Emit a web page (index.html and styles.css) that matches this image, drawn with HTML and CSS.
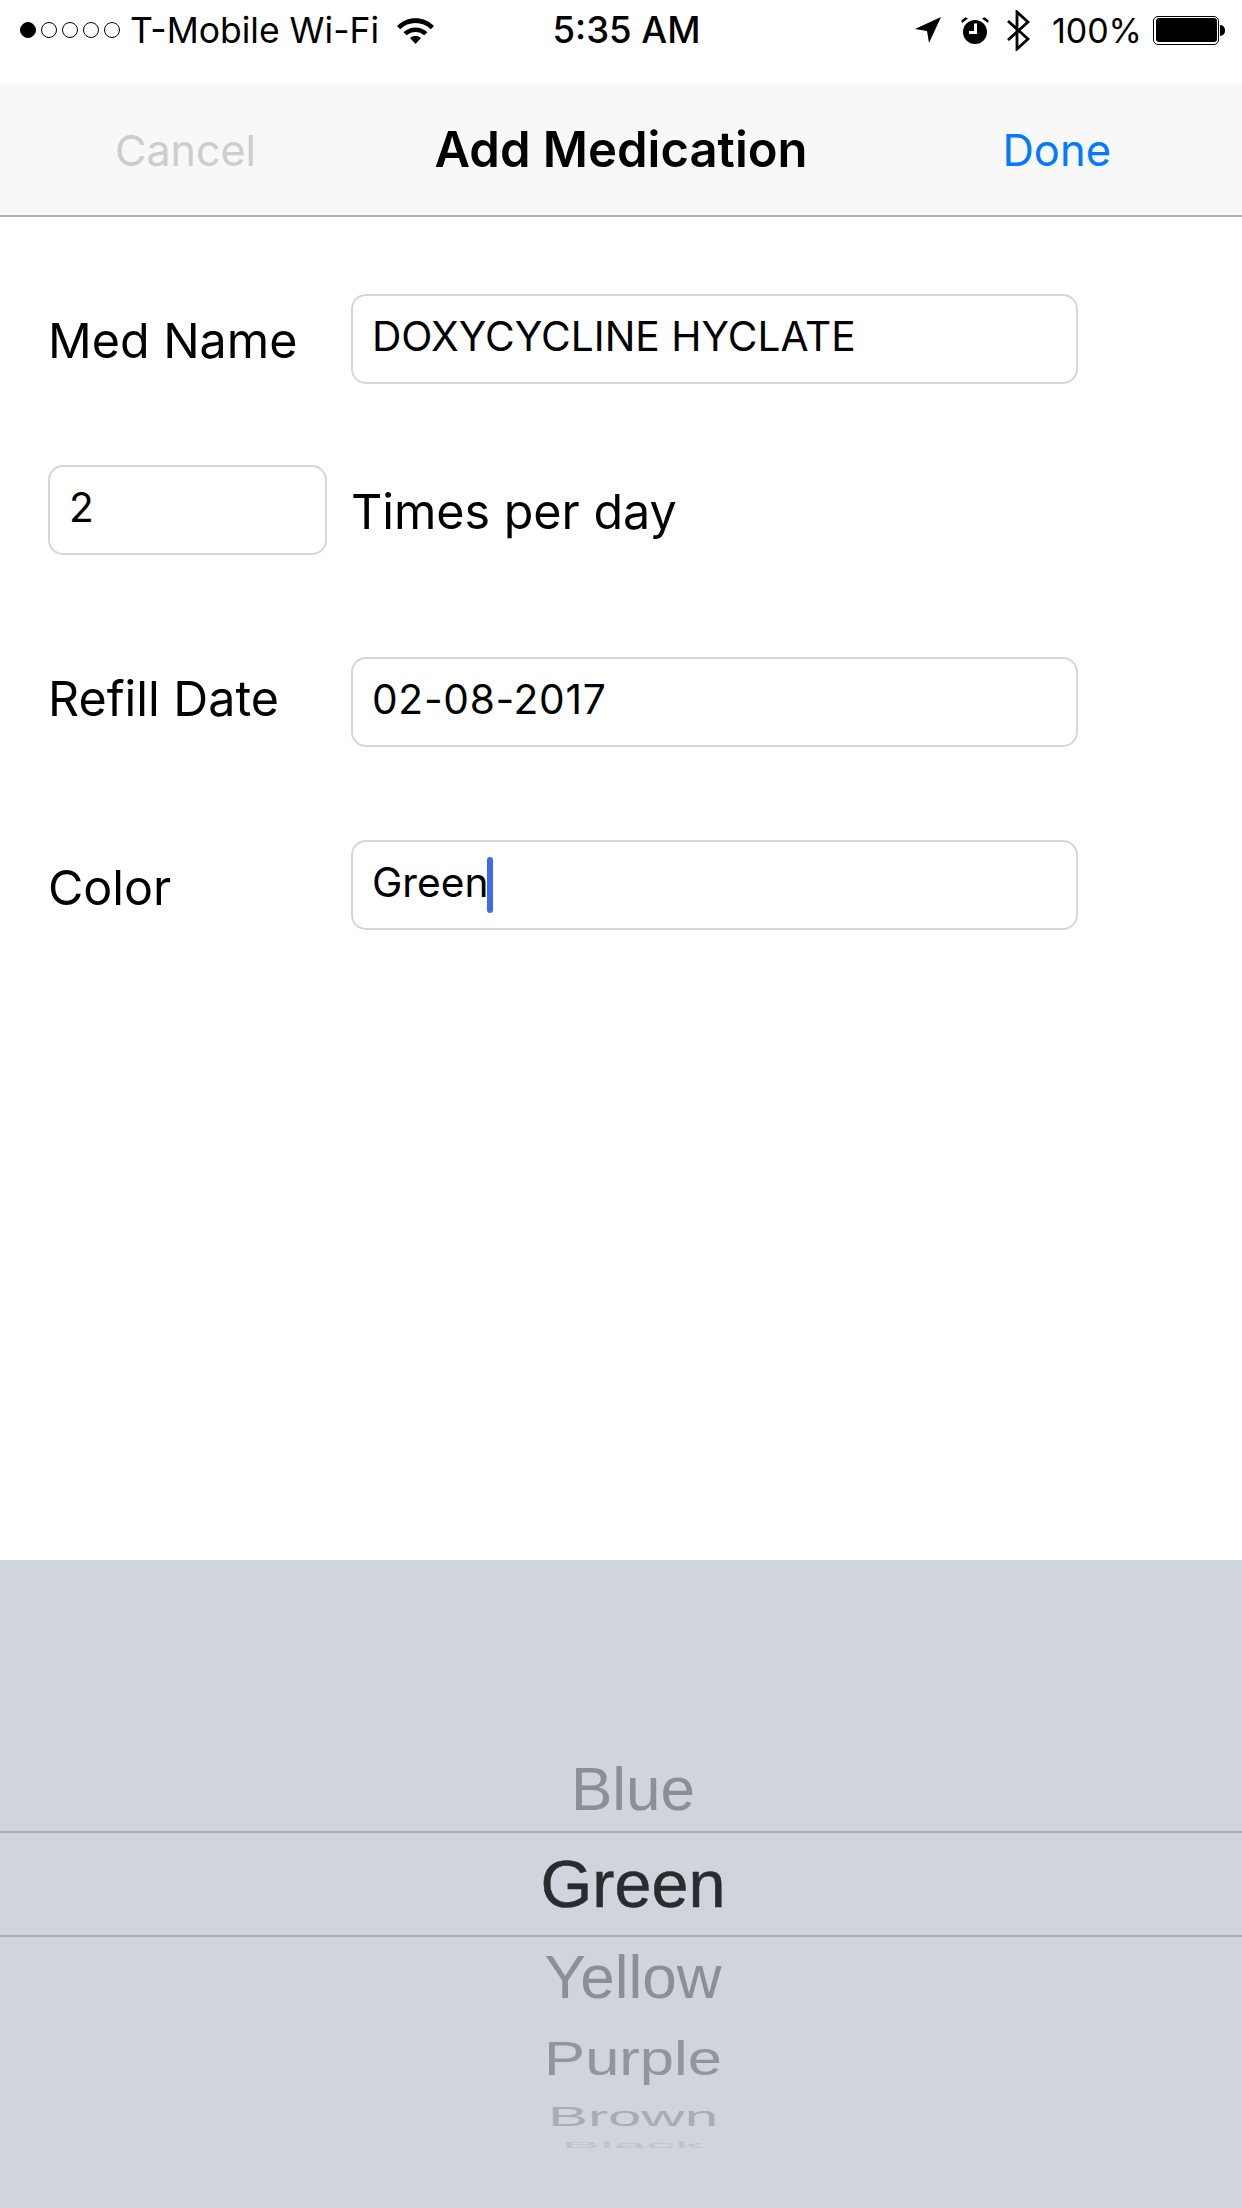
FILE: index.html
```html
<!DOCTYPE html>
<html lang="en">
<head>
<meta charset="utf-8">
<title>Add Medication</title>
<link rel="stylesheet" href="styles.css">
</head>
<body>
<div class="screen">
  <header class="status">
    <div class="status-left">
      <div class="dots"><i class="dot on"></i><i class="dot"></i><i class="dot"></i><i class="dot"></i><i class="dot"></i></div>
      <span class="carrier">T-Mobile Wi-Fi</span>
      <svg class="wifi" viewBox="0 0 37 27" width="37" height="27"><path d="M0 9C10 -1.500 27 -1.500 37 9L33.800 12.300C25.500 3.800 11.500 3.800 3.200 12.300Z"/><path d="M6.500 15.200C13.300 8.800 23.700 8.800 30.500 15.200L27.300 18.300C22.300 13.800 14.700 13.800 9.700 18.300Z"/><path d="M13 21C16.200 18.400 20.800 18.400 24 21L18.500 27Z"/></svg>
    </div>
    <div class="time">5:35 AM</div>
    <div class="status-right">
      <svg class="loc" viewBox="0 0 26 26" width="26" height="26"><path d="M26 0L0 12L12 14L14 26Z"/></svg>
      <svg class="alarm" viewBox="0 0 28 27" width="28" height="27"><circle cx="14" cy="15" r="12"/><path d="M1 6L7 1.500L4.500 .300L.3 3.500ZM27 6L21 1.500L23.500 .300L27.700 3.500Z"/><path class="alarm-hand" d="M14.500 6.500V15.500H8" /></svg>
      <svg class="bt" viewBox="0 0 23 41" width="23" height="41"><path class="bt-line" d="M1 11L21 29L10 39V2L21 12L1 30"/></svg>
      <span class="pct">100%</span>
      <div class="battery"><div class="battery-fill"></div></div><div class="battery-cap"></div>
    </div>
  </header>
  <nav class="navbar">
    <span class="nav-btn cancel">Cancel</span>
    <span class="nav-title">Add Medication</span>
    <span class="nav-btn done">Done</span>
  </nav>
  <main class="form">
    <div class="row row-name">
      <label class="label label-col label-name">Med Name</label>
      <div class="field field-wide">DOXYCYCLINE HYCLATE</div>
    </div>
    <div class="row row-times">
      <div class="field field-small">2</div>
      <label class="label label-after">Times per day</label>
    </div>
    <div class="row row-refill">
      <label class="label label-col label-refill">Refill Date</label>
      <div class="field field-wide field-date">02-08-2017</div>
    </div>
    <div class="row row-color">
      <label class="label label-col label-low">Color</label>
      <div class="field field-wide">Green<span class="caret"></span></div>
    </div>
  </main>
  <section class="picker">
    <div class="wheel w-blue"><span>Blue</span></div>
    <div class="wheel w-green"><span>Green</span></div>
    <div class="wheel w-yellow"><span>Yellow</span></div>
    <div class="wheel w-purple"><span>Purple</span></div>
    <div class="wheel w-brown"><span>Brown</span></div>
    <div class="wheel w-black"><span>Black</span></div>
  </section>
</div>
</body>
</html>
```
FILE: styles.css
```css
* { box-sizing: border-box; }
html, body { margin: 0; padding: 0; background: #fff; }
.screen {
  width: 1242px;
  height: 2208px;
  display: flex;
  flex-direction: column;
  overflow: hidden;
  font-family: Inter, "Liberation Sans", sans-serif;
  color: #000;
}
.status {
  height: 84px;
  flex: none;
  display: grid;
  grid-template-columns: 1fr auto 1fr;
  align-items: center;
  padding: 0 17px 24px 20px;
}
.status-left, .status-right { display: flex; align-items: center; }
.status-right { justify-content: flex-end; }
.dots { display: flex; gap: 5px; margin-right: 10px; }
.dot { width: 16px; height: 16px; border-radius: 50%; border: 1.500px solid #000; display: block; }
.dot.on { background: #000; }
.carrier { font-size: 35.500px; }
.wifi { margin-left: 18px; fill: #000; }
.time { font-size: 36.500px; font-weight: 500; margin-left: 8px; }
.loc { fill: #000; margin-right: 20px; }
.alarm { fill: #000; margin-right: 18px; }
.alarm-hand { fill: none; stroke: #fff; stroke-width: 3; }
.bt { margin-right: 22px; }
.bt-line { fill: none; stroke: #000; stroke-width: 2.800; }
.pct { font-size: 34px; margin-right: 11px; }
.battery { width: 66px; height: 29px; border: 1.500px solid #000; border-radius: 5px; padding: 1.500px; }
.battery-fill { width: 100%; height: 100%; background: #000; border-radius: 3px; }
.battery-cap { width: 5px; height: 11px; background: #000; border-radius: 0 5px 5px 0; margin-left: 1px; }

.navbar {
  height: 133px;
  flex: none;
  background: #f8f8f8;
  border-bottom: 2px solid #b2b2b2;
  display: grid;
  grid-template-columns: 1fr auto 1fr;
  align-items: center;
  padding: 0 115px;
}
.nav-btn { font-size: 43px; }
.cancel { color: #cdcdcd; }
.done { color: #007aff; justify-self: end; margin-right: 16px; font-size: 43.500px; }
.nav-title { font-size: 49px; font-weight: 600; }

.form { flex: 1; padding: 77px 0 0 48px; }
.row { display: flex; align-items: center; }
.row-times { margin-top: 81px; }
.row-refill { margin-top: 102px; }
.row-color { margin-top: 93px; }
.label { font-size: 48.400px; }
.label-col { width: 303px; flex: none; }
.label-name { padding-top: 2px; }
.label-refill { padding-bottom: 7px; }
.label-after { margin-left: 24px; padding-top: 3px; }
.label-low { padding-top: 4px; }
.field {
  height: 90px;
  border: 2px solid #d6d6d6;
  border-radius: 15px;
  font-size: 40.700px;
  padding: 0 0 5px 19px;
  display: flex;
  align-items: center;
}
.field-wide { width: 727px; }
.field-small { width: 279px; }
.field-date { letter-spacing: .7px; }
.caret {
  width: 6px;
  height: 56px;
  background: #4169ee;
  border-radius: 3px;
  margin-left: -1px;
  margin-top: 5px;
}

.picker {
  height: 648px;
  flex: none;
  background: #d0d4dc;
  padding-top: 187px;
  font-family: "Liberation Sans", Arial, sans-serif;
}
.wheel { display: flex; justify-content: center; align-items: center; padding-left: 24px; }
.wheel span { display: block; line-height: 1; }
.w-blue { height: 84px; font-size: 62px; color: #8d8f94; }
.w-green { height: 106px; font-size: 66.500px; color: #2a2b2e; border-top: 2px solid #a9abb0; border-bottom: 2px solid #a9abb0; -webkit-text-stroke: .5px #2a2b2e; }
.w-yellow { height: 80px; font-size: 62px; color: #8d8f94; }
.w-purple { height: 84px; font-size: 61.500px; color: #93959b; }
.w-purple span { transform: scaleY(.77); }
.w-brown { height: 32px; font-size: 60px; color: #a9acb2; }
.w-brown span { transform: scaleY(.45); }
.w-black { height: 24px; font-size: 58.500px; color: #c0c3ca; }
.w-black span { transform: scaleY(.14); }
```
